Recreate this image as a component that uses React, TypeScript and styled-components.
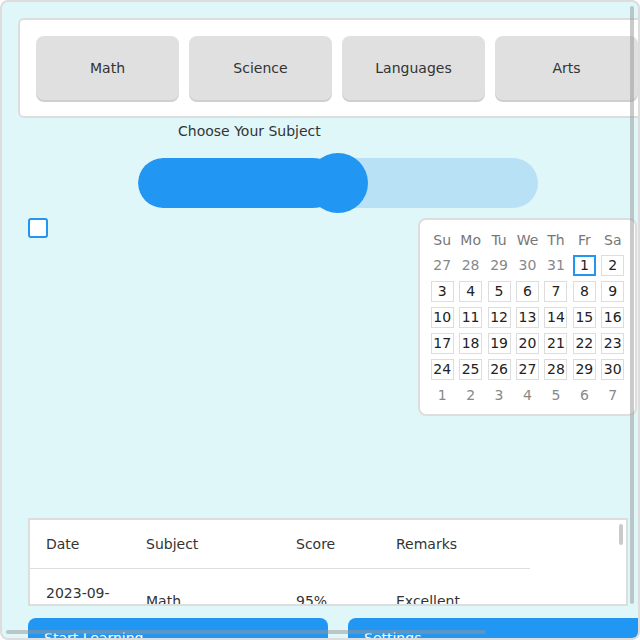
import React from 'react'
import styled, { createGlobalStyle } from 'styled-components'

const GlobalStyle = createGlobalStyle`
  body {
    margin: 0;
    font-family: "DejaVu Sans", "Noto Sans", sans-serif;
    color: #333;
  }
`

const Frame = styled.div`
  position: relative;
  box-sizing: border-box;
  width: 640px;
  height: 640px;
  border: 2px solid #ddd;
  border-radius: 8px;
  background: #e0f7fa;
  overflow: hidden;
`

const Content = styled.div`
  padding: 16px;
  width: 820px;
`

const SubjectCard = styled.div`
  display: flex;
  gap: 10px;
  width: max-content;
  padding: 16px;
  background: #fff;
  border: 2px solid #ddd;
  border-radius: 6px;
`

const SubjectButton = styled.button`
  width: 143px;
  height: 64px;
  border: none;
  border-radius: 8px;
  background: #e0e0e0;
  box-shadow: 0 2px 0 #cfcfcf;
  font-family: inherit;
  font-size: 14px;
  color: #333;
`

const Label = styled.div`
  margin: 3px 0 0 160px;
  font-size: 14px;
  line-height: 20px;
`

const Slider = styled.div`
  position: relative;
  display: flex;
  align-items: center;
  width: 400px;
  height: 60px;
  margin: 12px 0 0 120px;
`

const Rail = styled.div`
  display: flex;
  width: 100%;
  height: 50px;
  border-radius: 25px;
  background: #b9e1f6;
  overflow: hidden;
`

const Fill = styled.div`
  height: 100%;
  border-radius: 25px;
  background: #2196f3;
`

const Thumb = styled.div`
  position: absolute;
  top: 0;
  width: 60px;
  height: 60px;
  margin-left: -30px;
  border-radius: 50%;
  background: #2196f3;
`

const MiddleRow = styled.div`
  display: flex;
  align-items: flex-start;
  margin-top: 5px;
`

const CheckBox = styled.span`
  box-sizing: border-box;
  width: 20px;
  height: 20px;
  margin-left: 10px;
  border: 2px solid #2196f3;
  border-radius: 3px;
  background: #fff;
`

const Calendar = styled.div`
  box-sizing: border-box;
  width: 219px;
  margin-left: 370px;
  padding: 7px 8px 6px;
  background: #fff;
  border: 2px solid #ddd;
  border-radius: 8px;
  display: grid;
  grid-template-columns: repeat(7, 1fr);
  grid-template-rows: 25px;
  grid-auto-rows: 26px;
  font-size: 14px;
`

const WeekDay = styled.div`
  display: flex;
  align-items: center;
  justify-content: center;
  color: #777;
`

const DayCell = styled.div`
  display: flex;
  align-items: center;
  justify-content: center;
`

const Day = styled.span<{ $muted?: boolean; $selected?: boolean }>`
  box-sizing: border-box;
  display: flex;
  align-items: center;
  justify-content: center;
  width: 23px;
  height: 21px;
  border: ${p => (p.$muted ? 'none' : p.$selected ? '2px solid #2196f3' : '1px solid #ddd')};
  color: ${p => (p.$muted ? '#888' : '#222')};
`

const TableBox = styled.div`
  position: relative;
  box-sizing: border-box;
  width: 600px;
  height: 88px;
  margin: 102px 0 0 10px;
  background: #fff;
  border: 2px solid #ddd;
  overflow: hidden;
`

const Table = styled.table`
  width: 500px;
  border-collapse: collapse;
  table-layout: fixed;
  font-size: 14px;
  line-height: 16px;
`

const Col = styled.col<{ $w: number }>`
  width: ${p => p.$w}px;
`

const Cell = styled.td`
  padding: 16px;
  text-align: left;
  border-bottom: 1px solid #ddd;
  vertical-align: middle;
`

const HeadCell = styled(Cell).attrs({ as: 'th' })`
  font-weight: normal;
`

const Actions = styled.div`
  display: flex;
  gap: 20px;
  margin: 12px 0 0 10px;
`

const ActionButton = styled.button`
  width: 300px;
  padding: 10px 16px;
  border: none;
  border-radius: 8px;
  background: #2196f3;
  color: #fff;
  text-align: left;
  font-family: inherit;
  font-size: 14px;
  line-height: 20px;
`

const ScrollThumb = styled.div<{ $vertical?: boolean }>`
  position: absolute;
  border-radius: 2px;
  background: rgba(150, 150, 150, 0.5);
  ${p =>
    p.$vertical
      ? 'top: 4px; right: 4px; width: 4px; height: 598px;'
      : 'left: 4px; bottom: 4px; width: 480px; height: 4px;'}
`

const TableThumb = styled.div`
  position: absolute;
  top: 4px;
  right: 3px;
  width: 4px;
  height: 21px;
  border-radius: 2px;
  background: rgba(150, 150, 150, 0.5);
`

const weekDays = ['Su', 'Mo', 'Tu', 'We', 'Th', 'Fr', 'Sa']

const days: { n: number; muted?: boolean }[] = [
  ...[27, 28, 29, 30, 31].map(n => ({ n, muted: true })),
  ...Array.from({ length: 30 }, (_, i) => ({ n: i + 1 })),
  ...[1, 2, 3, 4, 5, 6, 7].map(n => ({ n, muted: true })),
]

export default function App() {
  return (
    <>
      <GlobalStyle />
      <Frame>
        <Content>
          <SubjectCard>
            <SubjectButton>Math</SubjectButton>
            <SubjectButton>Science</SubjectButton>
            <SubjectButton>Languages</SubjectButton>
            <SubjectButton>Arts</SubjectButton>
          </SubjectCard>

          <Label>Choose Your Subject</Label>
          <Slider>
            <Rail>
              <Fill style={{ width: '50%' }} />
            </Rail>
            <Thumb style={{ left: '50%' }} />
          </Slider>

          <MiddleRow>
            <CheckBox />
            <Calendar>
              {weekDays.map(d => (
                <WeekDay key={d}>{d}</WeekDay>
              ))}
              {days.map((d, i) => (
                <DayCell key={i}>
                  <Day $muted={d.muted} $selected={!d.muted && d.n === 1}>
                    {d.n}
                  </Day>
                </DayCell>
              ))}
            </Calendar>
          </MiddleRow>

          <TableBox>
            <Table>
              <colgroup>
                <Col $w={100} />
                <Col $w={150} />
                <Col $w={100} />
                <Col $w={150} />
              </colgroup>
              <thead>
                <tr>
                  <HeadCell>Date</HeadCell>
                  <HeadCell>Subject</HeadCell>
                  <HeadCell>Score</HeadCell>
                  <HeadCell>Remarks</HeadCell>
                </tr>
              </thead>
              <tbody>
                <tr>
                  <Cell>2023-09-01</Cell>
                  <Cell>Math</Cell>
                  <Cell>95%</Cell>
                  <Cell>Excellent</Cell>
                </tr>
                <tr>
                  <Cell>2023-09-02</Cell>
                  <Cell>Science</Cell>
                  <Cell>88%</Cell>
                  <Cell>Good</Cell>
                </tr>
              </tbody>
            </Table>
            <TableThumb />
          </TableBox>

          <Actions>
            <ActionButton>Start Learning</ActionButton>
            <ActionButton>Settings</ActionButton>
          </Actions>
        </Content>
        <ScrollThumb $vertical />
        <ScrollThumb />
      </Frame>
    </>
  )
}
